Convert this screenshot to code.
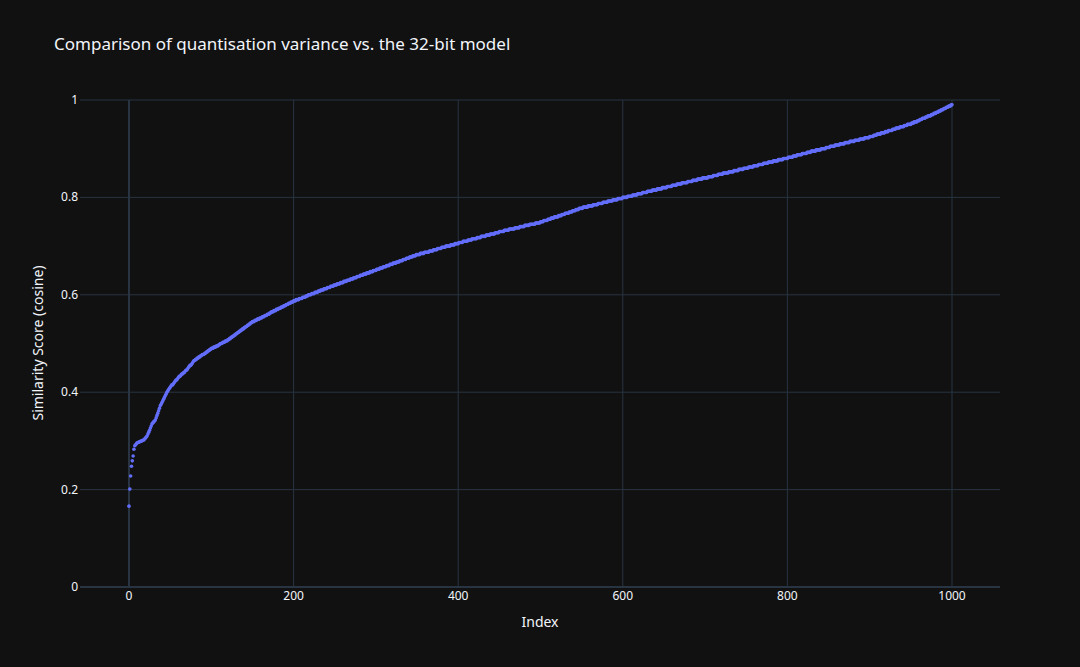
import React from 'react'

const anchors: [number, number][] = [
  [0, 0.166], [1, 0.201], [2, 0.228], [3, 0.248], [4, 0.259], [5, 0.269], [6, 0.283], [7, 0.29],
  [10, 0.296], [18, 0.302], [22, 0.31], [25, 0.322], [28, 0.335], [32, 0.343], [35, 0.357],
  [38, 0.372], [41, 0.382], [45, 0.396], [50, 0.41], [60, 0.43], [70, 0.446], [80, 0.466],
  [100, 0.489], [120, 0.507], [150, 0.544], [200, 0.587], [250, 0.62], [300, 0.651],
  [350, 0.682], [400, 0.706], [450, 0.729], [500, 0.749], [550, 0.778], [600, 0.799],
  [650, 0.82], [700, 0.84], [750, 0.86], [800, 0.881], [850, 0.903], [900, 0.924],
  [950, 0.951], [980, 0.973], [1000, 0.99],
]

const value = (i: number) => {
  for (let k = 0; k < anchors.length - 1; k++) {
    const [x0, y0] = anchors[k]
    const [x1, y1] = anchors[k + 1]
    if (i >= x0 && i <= x1) return y0 + ((y1 - y0) * (i - x0)) / (x1 - x0)
  }
  return 0.99
}

const px = (i: number) => 129 + i * 0.823
const py = (v: number) => 587 - v * 487

// small plateaus like the real sorted scores
const points = Array.from({ length: 1001 }, (_, i) => {
  const v = value(i)
  const q = i > 45 ? Math.round(v / 0.0025) * 0.0025 : v
  return { x: px(i), y: py(q) }
})

export default function App() {
  const xTicks = [0, 200, 400, 600, 800, 1000]
  const yTicks = [0, 0.2, 0.4, 0.6, 0.8, 1]
  return (
    <div className="w-[1080px] h-[667px] bg-[#111111] font-['Liberation_Sans',Arial,sans-serif]">
      <svg width="1080" height="667">
        {xTicks.slice(1).map(t => (
          <line key={t} x1={px(t)} x2={px(t)} y1={100} y2={587} stroke="#283442" strokeWidth={1} />
        ))}
        {yTicks.slice(1).map(t => (
          <line key={t} x1={80} x2={1000} y1={py(t)} y2={py(t)} stroke="#283442" strokeWidth={1} />
        ))}
        <line x1={px(0)} x2={px(0)} y1={100} y2={587} stroke="#283442" strokeWidth={2} />
        <line x1={80} x2={1000} y1={587} y2={587} stroke="#283442" strokeWidth={2} />
        {points.map((p, i) => (
          <circle key={i} cx={p.x} cy={p.y} r={1.8} fill="#636efa" />
        ))}
        {xTicks.map(t => (
          <text key={t} x={px(t)} y={600} fontSize={12} fill="#f2f5fa" textAnchor="middle">{t}</text>
        ))}
        {yTicks.map(t => (
          <text key={t} x={78} y={py(t) + 4} fontSize={12} fill="#f2f5fa" textAnchor="end">{t}</text>
        ))}
        <text x={54} y={50} fontSize={17} fill="#f2f5fa">Comparison of quantisation variance vs. the 32-bit model</text>
        <text x={540} y={627} fontSize={14} fill="#f2f5fa" textAnchor="middle">Index</text>
        <text x={43} y={343} fontSize={14} fill="#f2f5fa" textAnchor="middle" transform="rotate(-90 43 343)">Similarity Score (cosine)</text>
      </svg>
    </div>
  )
}
